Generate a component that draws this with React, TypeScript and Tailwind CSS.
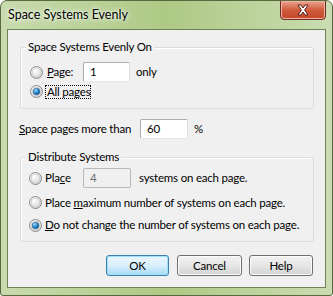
import React from "react";

const font = { fontFamily: 'Lato, "Liberation Sans", sans-serif' };

function Radio({ checked }: { checked?: boolean }) {
  return (
    <svg width="13" height="13" viewBox="0 0 13 13" className="shrink-0">
      <defs>
        <radialGradient id="rfill" cx="0.35" cy="0.3" r="0.8">
          <stop offset="0" stopColor="#ffffff" />
          <stop offset="1" stopColor="#d4d4d4" />
        </radialGradient>
        <radialGradient id="rdot" cx="0.35" cy="0.3" r="0.8">
          <stop offset="0" stopColor="#9fdcff" />
          <stop offset="0.6" stopColor="#1f7dc4" />
          <stop offset="1" stopColor="#0d4f8c" />
        </radialGradient>
      </defs>
      <circle cx="6.5" cy="6.5" r="6" fill="url(#rfill)" stroke="#8b8b8b" strokeWidth="1" />
      <circle cx="6.5" cy="6.5" r="4.3" fill="none" stroke="#c8c8c8" strokeWidth="0.8" />
      {checked && <circle cx="6.5" cy="6.5" r="3.3" fill="url(#rdot)" stroke="#215e8f" strokeWidth="0.6" />}
    </svg>
  );
}

function TextBox({ value, disabled, w }: { value: string; disabled?: boolean; w: string }) {
  return (
    <div
      className={`${w} h-[20px] shrink-0 border rounded-[2px] pl-[6px] flex items-center ${
        disabled
          ? "bg-[#f0f0f0] text-[#6d6d6d] border-[#b5b8bc]"
          : "bg-white text-black border-[#abadb3] border-b-[#e3e9ef] border-r-[#dbdfe6]"
      }`}
    >
      {value}
    </div>
  );
}

function Button({ label, w, primary }: { label: string; w: string; primary?: boolean }) {
  return (
    <div
      className={`${w} h-[21px] rounded-[3px] border flex items-center justify-center ${
        primary
          ? "border-[#3c7fb1] bg-gradient-to-b from-[#eaf6fd] via-[#d9f0fc] to-[#a7d9f5] shadow-[inset_0_0_0_1px_#9ee0fb]"
          : "border-[#707070] bg-gradient-to-b from-[#f2f2f2] via-[#e6e6e6] to-[#d2d2d2] shadow-[inset_0_0_0_1px_#fcfcfc]"
      }`}
    >
      {label}
    </div>
  );
}

function GroupBox({ title, h, children }: { title: string; h: string; children: React.ReactNode }) {
  return (
    <div className={`relative ml-[12px] w-[294px] ${h} border border-[#d5dfe5] rounded-[3px] shadow-[inset_1px_1px_0_#fff]`}>
      <span className="absolute left-[5px] -top-[9px] px-[2px] bg-[#f0f0f0] leading-[16px] whitespace-nowrap">{title}</span>
      {children}
    </div>
  );
}

export default function App() {
  return (
    <div
      className="w-[333px] h-[296px] text-[11.5px] tracking-[-0.2px] text-black overflow-hidden rounded-t-[7px] rounded-b-[3px] border border-[#59693f] bg-gradient-to-r from-[#c8dbae] via-[#aec985] to-[#cadcb1] flex flex-col whitespace-nowrap"
      style={font}
    >
      {/* Title bar */}
      <div className="h-[28px] flex items-start relative shrink-0">
        <span className="ml-[7px] mt-[6px] text-[12.5px] tracking-normal leading-[16px] [text-shadow:0_0_6px_#fff,0_0_3px_#fff]">
          Space Systems Evenly
        </span>
        <div className="absolute right-[6px] -top-[1px] w-[46px] h-[20px] rounded-b-[4px] border border-[#6b2c22] bg-gradient-to-b from-[#eba48f] via-[#cf5a3c] to-[#c4482a] shadow-[inset_0_0_0_1px_#f0b2a3] flex items-center justify-center">
          <svg width="14" height="12" viewBox="0 0 14 12">
            <path
              d="M2 1 L5 1 L7 4 L9 1 L12 1 L8.6 6 L12 11 L9 11 L7 8 L5 11 L2 11 L5.4 6 Z"
              fill="#ffffff"
              stroke="#5b2018"
              strokeWidth="1"
              strokeLinejoin="round"
            />
          </svg>
        </div>
      </div>

      {/* Client area */}
      <div className="mx-[6px] mb-[7px] flex-1 border border-[#6f8256] bg-[#f0f0f0] flex flex-col">
        <div className="mt-[17px]">
          <GroupBox title="Space Systems Evenly On" h="h-[62px]">
            <div className="pt-[14px] pl-[9px] h-[34px] flex items-center">
              <Radio />
              <span className="ml-[4px] w-[36px]">
                <span className="underline">P</span>age:
              </span>
              <TextBox value="1" w="w-[47px]" />
              <span className="ml-[6px]">only</span>
            </div>
            <div className="pl-[9px] h-[19px] flex items-center">
              <Radio checked />
              <span className="ml-[2px] pl-[2px] pr-[1px] leading-[14px] outline outline-1 outline-dotted outline-black -outline-offset-1">
                All pages
              </span>
            </div>
          </GroupBox>
        </div>

        <div className="mt-[10px] h-[20px] flex items-center pl-[11px]">
          <span className="w-[121px]">
            <span className="underline">S</span>pace pages more than
          </span>
          <TextBox value="60" w="w-[48px]" />
          <span className="ml-[6px]">%</span>
        </div>

        <div className="mt-[18px]">
          <GroupBox title="Distribute Systems" h="h-[85px]">
            <div className="pt-[10px] pl-[8px] h-[30px] flex items-center">
              <Radio />
              <span className="ml-[3px] w-[38px]">
                Pla<span className="underline">c</span>e
              </span>
              <TextBox value="4" disabled w="w-[48px]" />
              <span className="ml-[8px]">systems on each page.</span>
            </div>
            <div className="pl-[8px] h-[29px] flex items-center">
              <Radio />
              <span className="ml-[3px]">
                Place <span className="underline">m</span>aximum number of systems on each page.
              </span>
            </div>
            <div className="pl-[8px] h-[16px] flex items-center">
              <Radio checked />
              <span className="ml-[3px]">
                <span className="underline">D</span>o not change the number of systems on each page.
              </span>
            </div>
          </GroupBox>
        </div>

        <div className="mt-[13px] flex pl-[98px]">
          <Button label="OK" w="w-[63px]" primary />
          <div className="ml-[8px]">
            <Button label="Cancel" w="w-[65px]" />
          </div>
          <div className="ml-[7px]">
            <Button label="Help" w="w-[64px]" />
          </div>
        </div>
      </div>
    </div>
  );
}
